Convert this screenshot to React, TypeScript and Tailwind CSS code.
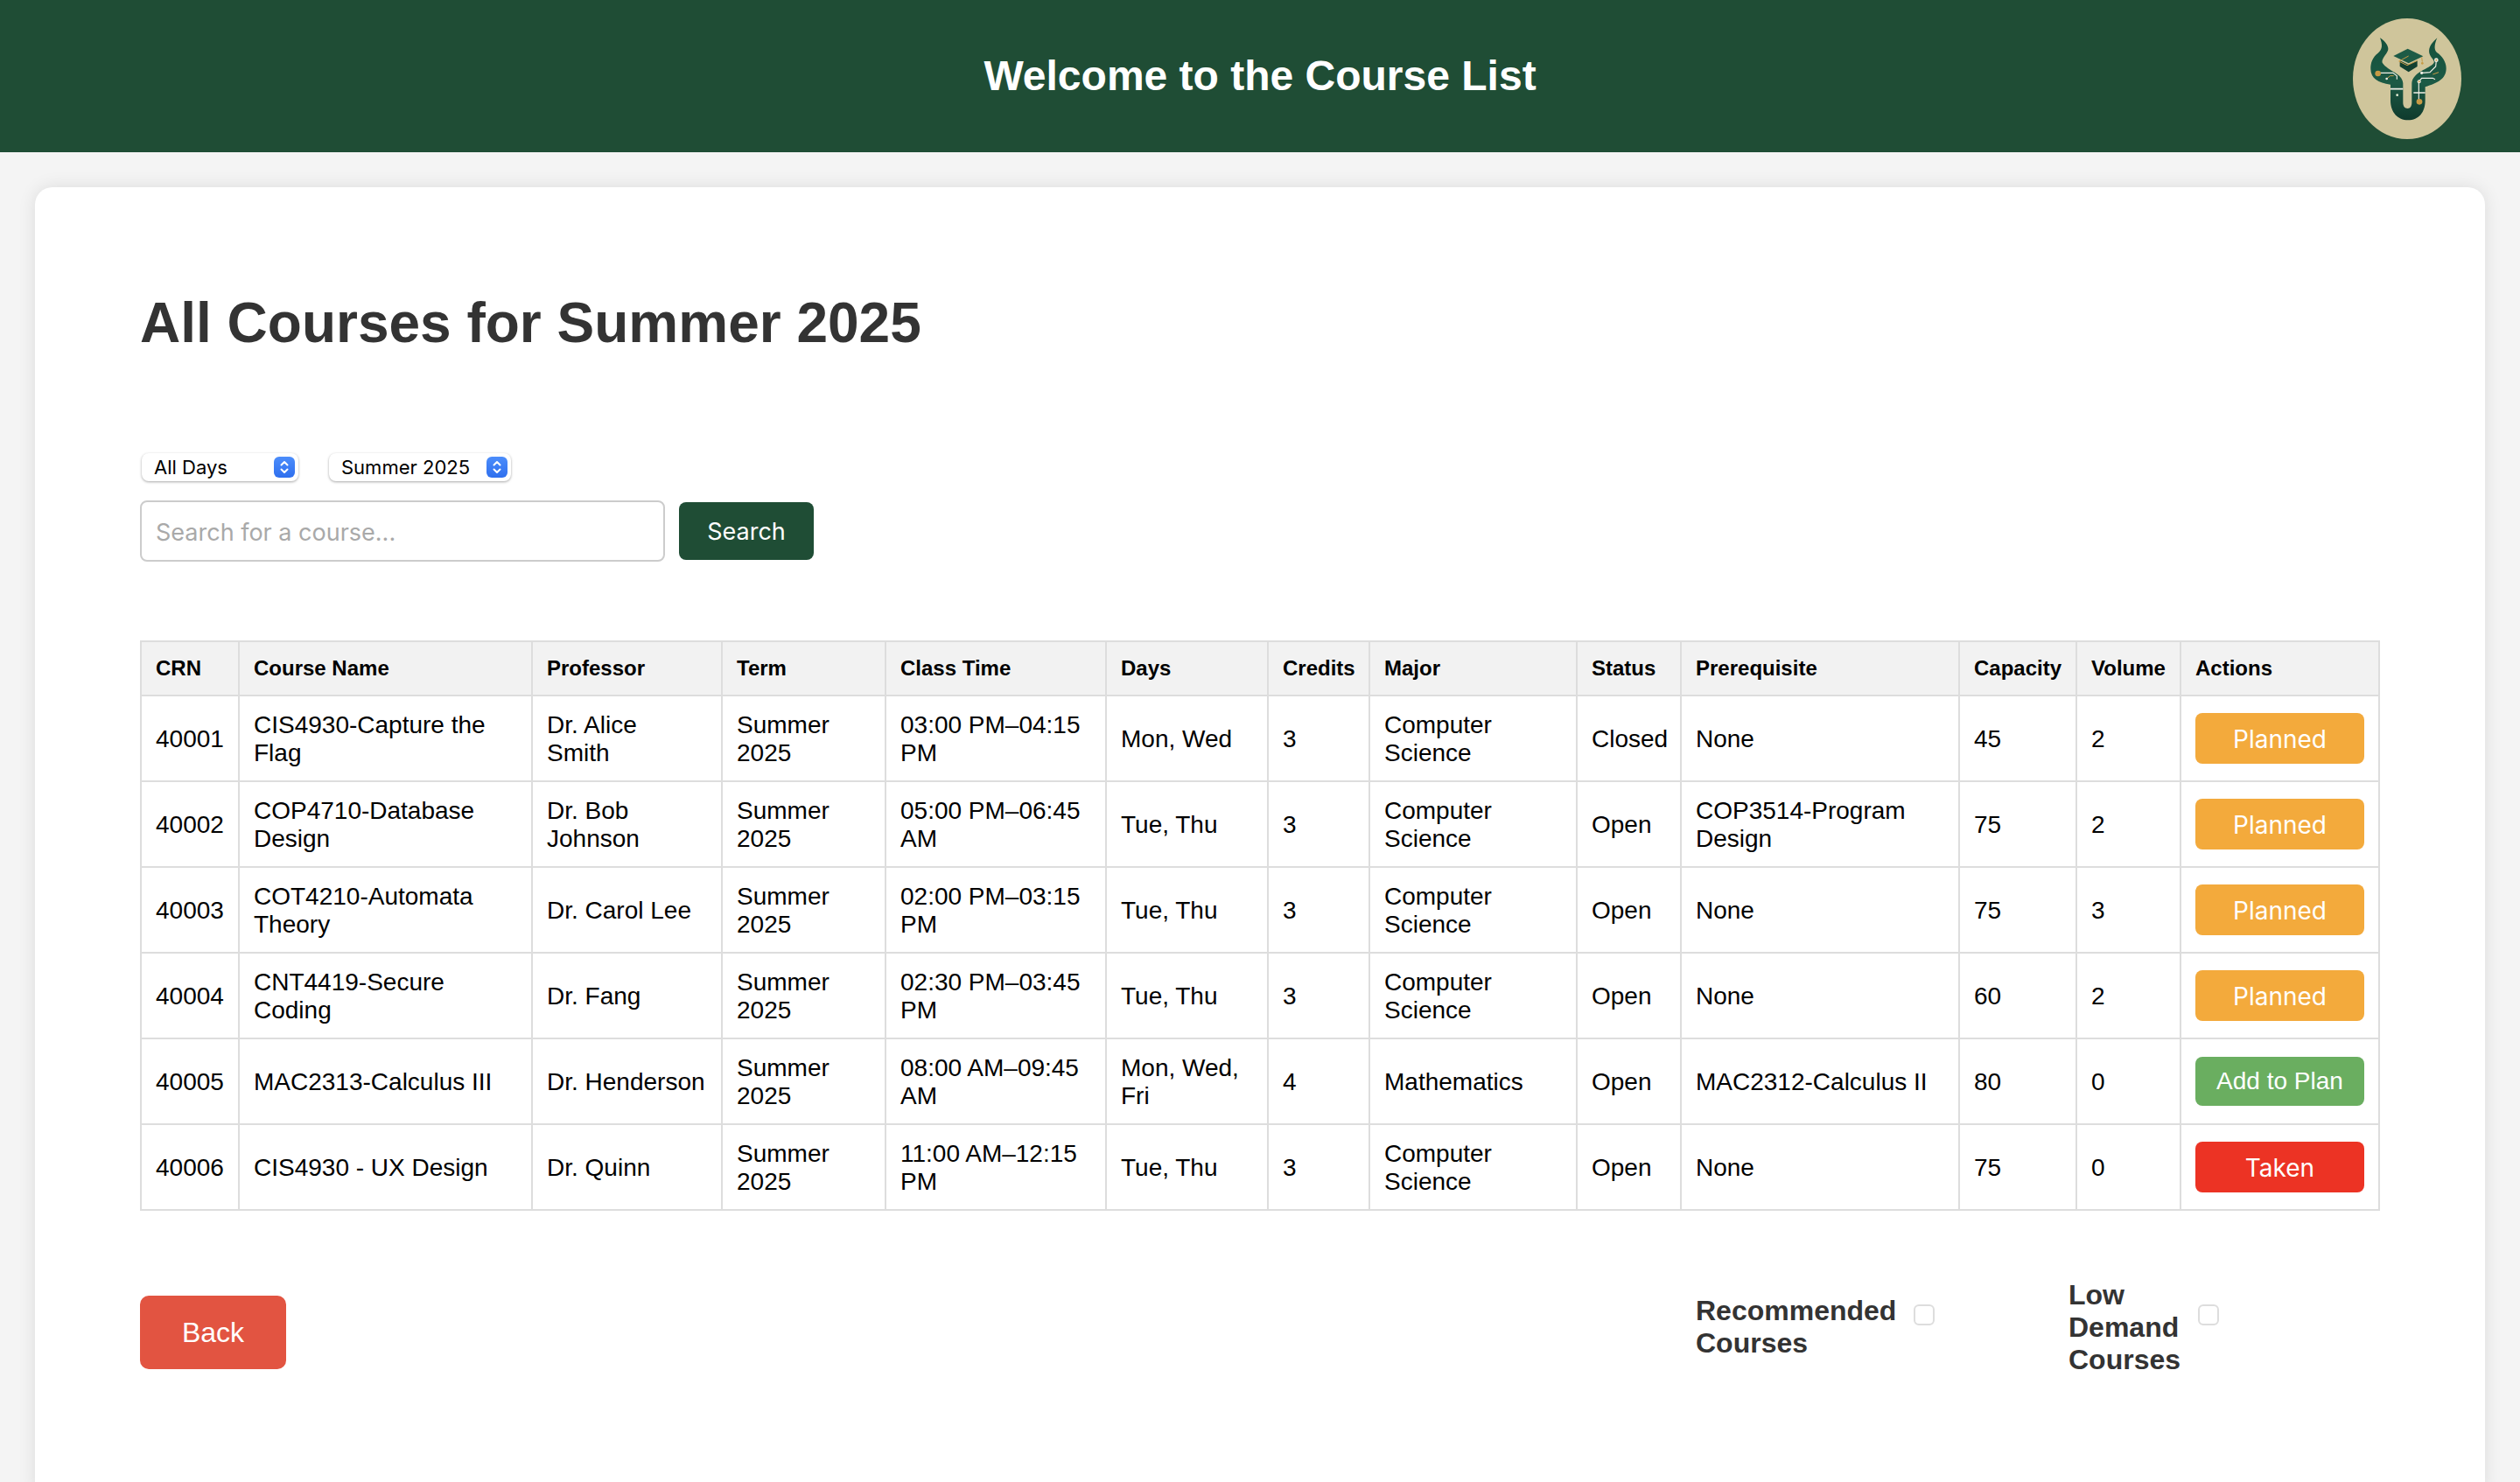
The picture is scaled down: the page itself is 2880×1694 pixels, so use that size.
import React from "react";

type Course = {
  crn: string;
  name: string;
  professor: string;
  time: string;
  days: string;
  credits: string;
  major: string;
  status: string;
  prereq: string;
  capacity: string;
  volume: string;
  action: "Planned" | "Add to Plan" | "Taken";
};

const COURSES: Course[] = [
  { crn: "40001", name: "CIS4930-Capture the Flag", professor: "Dr. Alice\nSmith", time: "03:00 PM–04:15 PM", days: "Mon, Wed", credits: "3", major: "Computer Science", status: "Closed", prereq: "None", capacity: "45", volume: "2", action: "Planned" },
  { crn: "40002", name: "COP4710-Database Design", professor: "Dr. Bob Johnson", time: "05:00 PM–06:45 AM", days: "Tue, Thu", credits: "3", major: "Computer Science", status: "Open", prereq: "COP3514-Program Design", capacity: "75", volume: "2", action: "Planned" },
  { crn: "40003", name: "COT4210-Automata Theory", professor: "Dr. Carol Lee", time: "02:00 PM–03:15 PM", days: "Tue, Thu", credits: "3", major: "Computer Science", status: "Open", prereq: "None", capacity: "75", volume: "3", action: "Planned" },
  { crn: "40004", name: "CNT4419-Secure Coding", professor: "Dr. Fang", time: "02:30 PM–03:45 PM", days: "Tue, Thu", credits: "3", major: "Computer Science", status: "Open", prereq: "None", capacity: "60", volume: "2", action: "Planned" },
  { crn: "40005", name: "MAC2313-Calculus III", professor: "Dr. Henderson", time: "08:00 AM–09:45 AM", days: "Mon, Wed, Fri", credits: "4", major: "Mathematics", status: "Open", prereq: "MAC2312-Calculus II", capacity: "80", volume: "0", action: "Add to Plan" },
  { crn: "40006", name: "CIS4930 - UX Design", professor: "Dr. Quinn", time: "11:00 AM–12:15 PM", days: "Tue, Thu", credits: "3", major: "Computer Science", status: "Open", prereq: "None", capacity: "75", volume: "0", action: "Taken" }
];

const HEADERS = ["CRN", "Course Name", "Professor", "Term", "Class Time", "Days", "Credits", "Major", "Status", "Prerequisite", "Capacity", "Volume", "Actions"];
const WIDTHS = [112, 335, 217, 187, 252, 185, 116, 237, 119, 318, 134, 119, 227];

const TD = "h-[98px] whitespace-pre-line border-2 border-[#ddd] px-4 pt-[2px] align-middle";

function Logo() {
  return (
    <svg viewBox="-36 -57 372 414" className="absolute right-[67px] top-[21px] h-[138px] w-[124px]">
      <defs>
        <linearGradient id="bull" x1="0" y1="0" x2="0" y2="1">
          <stop offset="0" stopColor="#14503c" />
          <stop offset="0.55" stopColor="#1c5a45" />
          <stop offset="1" stopColor="#0f3a2d" />
        </linearGradient>
      </defs>
      <ellipse cx="150" cy="150" rx="186" ry="207" fill="#cfc59b" />
      <path
        fill="url(#bull)"
        d="M57 10 C66 32 66 50 50 62 C32 76 24 95 25 118 C26 148 50 165 93 170 L93 225 C93 265 118 292 153 292 C190 292 212 265 212 225 L212 178 C255 165 284 150 284 115 C284 92 270 72 252 60 C240 50 245 28 253 10 C236 25 222 42 226 62 C230 78 245 85 242 95 C225 118 170 125 166 165 L166 232 C166 245 160 252 152 252 C142 252 136 245 136 232 L136 165 C134 130 85 125 65 95 C60 80 88 60 85 45 C82 30 70 18 57 10 Z"
      />
      <path fill="#1d5b46" d="M103 72 L152 47 L205 73 L155 97 Z" />
      <path fill="#123f30" d="M125 88 L155 102 L185 88 L185 108 L155 127 L125 108 Z" />
      <path fill="none" stroke="#c79a45" strokeWidth="3" d="M122 90 L155 72 M122 90 L150 104 L185 88" />
      <path fill="none" stroke="#c79a45" strokeWidth="3" d="M200 76 L202 92" />
      <circle cx="202" cy="97" r="4" fill="#c79a45" />
      <path fill="none" stroke="#f1efe6" strokeWidth="3.5" d="M58 130 L102 130 L115 140 L115 152" />
      <path fill="none" stroke="#c79a45" strokeWidth="3" d="M80 150 L92 140 L104 140" />
      <circle cx="50" cy="132" r="10" fill="#c79a45" />
      <circle cx="80" cy="150" r="4" fill="#f1efe6" />
      <path fill="none" stroke="#f1efe6" strokeWidth="5" d="M93 185 L136 185 M172 198 L212 198" />
      <path fill="none" stroke="#f1efe6" strokeWidth="3.5" d="M190 222 L190 160 L200 148 L238 148 L246 152" />
      <path fill="none" stroke="#f1efe6" strokeWidth="3.5" d="M202 130 L228 128 L248 108 L250 88" />
      <path fill="none" stroke="#c79a45" strokeWidth="3" d="M238 135 L258 128" />
      <circle cx="250" cy="86" r="7" fill="#f1efe6" />
      <circle cx="250" cy="86" r="3" fill="#c79a45" />
      <circle cx="191" cy="160" r="6" fill="#f1efe6" />
      <circle cx="191" cy="160" r="3" fill="#c79a45" />
      <circle cx="200" cy="130" r="5" fill="#f1efe6" />
      <circle cx="192" cy="229" r="10" fill="#c79a45" />
      <circle cx="116" cy="206" r="4" fill="#e9f0d8" />
    </svg>
  );
}

function Dropdown({ label, width }: { label: string; width: string }) {
  return (
    <div className={`flex h-[32px] items-center justify-between rounded-[8px] bg-white pl-[14px] pr-[4px] font-['Inter',sans-serif] text-[22px] text-black shadow-[0_1px_3px_rgba(0,0,0,0.35)] ${width}`}>
      <span>{label}</span>
      <span className="flex h-[24px] w-[24px] items-center justify-center rounded-[6px] bg-gradient-to-b from-[#4c8dfb] to-[#2f6fee]">
        <svg viewBox="0 0 24 24" className="h-[24px] w-[24px]" fill="none" stroke="white" strokeWidth="2" strokeLinecap="round" strokeLinejoin="round">
          <path d="M8.5 9.5 L12 6 L15.5 9.5 M8.5 14.5 L12 18 L15.5 14.5" />
        </svg>
      </span>
    </div>
  );
}

function ActionButton({ action }: { action: Course["action"] }) {
  if (action === "Add to Plan") {
    return (
      <button type="button" className="h-[56px] w-[193px] rounded-[8px] bg-[#6aae60] font-['Liberation_Sans',sans-serif] text-[28px] text-white">
        {action}
      </button>
    );
  }
  return (
    <button
      type="button"
      className={
        action === "Taken"
          ? "h-[58px] w-[193px] rounded-[8px] bg-[#ec3324] pt-[1px] font-['Inter',sans-serif] text-[28px] text-white"
          : "h-[58px] w-[193px] rounded-[8px] bg-[#f3aa3c] pt-[1px] font-['Inter',sans-serif] text-[28px] text-white"
      }
    >
      {action}
    </button>
  );
}

export default function App() {
  return (
    <div className="h-[1694px] overflow-hidden bg-[#f4f4f4] font-['Liberation_Sans',sans-serif]">
      <header className="relative flex h-[174px] items-center justify-center bg-[#1f4d35]">
        <h2 className="text-[48px] font-bold text-white">Welcome to the Course List</h2>
        <Logo />
      </header>

      <main className="mx-[40px] mt-[40px] h-[1500px] rounded-[20px] bg-white px-[120px] pt-[118px] shadow-[0_0_20px_rgba(0,0,0,0.1)]">
        <h1 className="h-[74px] text-[64px] font-bold leading-[74px] text-[#333]">All Courses for Summer 2025</h1>

        <div className="mt-[112px] flex gap-[35px] pl-[2px]">
          <Dropdown label="All Days" width="w-[179px]" />
          <Dropdown label="Summer 2025" width="w-[208px]" />
        </div>

        <div className="mt-[22px] flex items-center gap-[16px]">
          <input
            placeholder="Search for a course..."
            className="h-[70px] w-[600px] rounded-[8px] border-2 border-[#ccc] bg-white px-[16px] pt-[2px] font-['Inter',sans-serif] text-[27px] placeholder:text-[#a9a9a9]"
          />
          <button type="button" className="h-[66px] w-[154px] rounded-[8px] bg-[#1f4d35] pt-[2px] font-['Inter',sans-serif] text-[27px] text-white">
            Search
          </button>
        </div>

        <table className="mt-[90px] w-[2558px] table-fixed border-collapse text-[28px] leading-[32px] text-black">
          <colgroup>
            {WIDTHS.map((w, i) => (
              <col key={i} style={{ width: w }} />
            ))}
          </colgroup>
          <thead>
            <tr>
              {HEADERS.map((h) => (
                <th key={h} className="h-[62px] border-2 border-[#ddd] bg-[#f2f2f2] px-4 text-left text-[24px] font-bold">
                  {h}
                </th>
              ))}
            </tr>
          </thead>
          <tbody>
            {COURSES.map((c) => (
              <tr key={c.crn}>
                <td className={TD}>{c.crn}</td>
                <td className={TD}>{c.name}</td>
                <td className={TD}>{c.professor}</td>
                <td className={TD}>Summer 2025</td>
                <td className={TD}>{c.time}</td>
                <td className={TD}>{c.days}</td>
                <td className={TD}>{c.credits}</td>
                <td className={TD}>{c.major}</td>
                <td className={TD}>{c.status}</td>
                <td className={TD}>{c.prereq}</td>
                <td className={TD}>{c.capacity}</td>
                <td className={TD}>{c.volume}</td>
                <td className="h-[98px] border-2 border-[#ddd] px-4 align-middle">
                  <ActionButton action={c.action} />
                </td>
              </tr>
            ))}
          </tbody>
        </table>

        <div className="mt-[73px] flex h-[120px] items-center">
          <button type="button" className="mb-auto mt-[24px] h-[84px] w-[167px] rounded-[10px] bg-[#e25441] text-[32px] text-white">
            Back
          </button>
          <div className="ml-[1611px] flex items-center gap-[19px]">
            <span className="w-[230px] text-[32px] font-bold leading-[37px] text-[#333]">Recommended Courses</span>
            <input type="checkbox" className="mb-[28px] h-[24px] w-[24px] appearance-none rounded-[6px] border-2 border-[#ddd] bg-white" />
          </div>
          <div className="ml-[153px] flex items-center gap-[21px]">
            <span className="w-[127px] text-[32px] font-bold leading-[37px] text-[#333]">Low Demand Courses</span>
            <input type="checkbox" className="mb-[28px] h-[24px] w-[24px] appearance-none rounded-[6px] border-2 border-[#ddd] bg-white" />
          </div>
        </div>
      </main>
    </div>
  );
}
